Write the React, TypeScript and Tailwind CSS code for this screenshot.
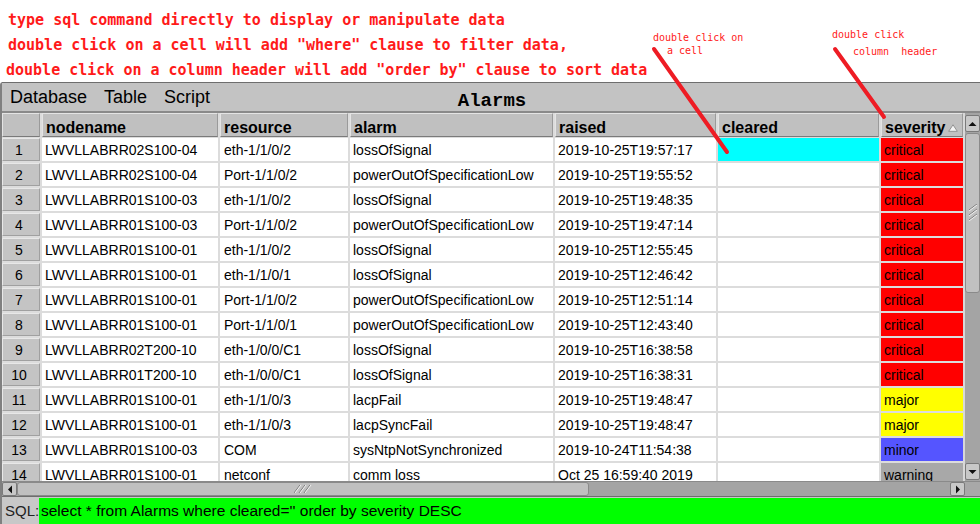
import React from "react";

type Row = [string, string, string, string, string, string];

const rows: Row[] = [
  ["LWVLLABRR02S100-04", "eth-1/1/0/2", "lossOfSignal", "2019-10-25T19:57:17", "cyan", "critical"],
  ["LWVLLABRR02S100-04", "Port-1/1/0/2", "powerOutOfSpecificationLow", "2019-10-25T19:55:52", "", "critical"],
  ["LWVLLABRR01S100-03", "eth-1/1/0/2", "lossOfSignal", "2019-10-25T19:48:35", "", "critical"],
  ["LWVLLABRR01S100-03", "Port-1/1/0/2", "powerOutOfSpecificationLow", "2019-10-25T19:47:14", "", "critical"],
  ["LWVLLABRR01S100-01", "eth-1/1/0/2", "lossOfSignal", "2019-10-25T12:55:45", "", "critical"],
  ["LWVLLABRR01S100-01", "eth-1/1/0/1", "lossOfSignal", "2019-10-25T12:46:42", "", "critical"],
  ["LWVLLABRR01S100-01", "Port-1/1/0/2", "powerOutOfSpecificationLow", "2019-10-25T12:51:14", "", "critical"],
  ["LWVLLABRR01S100-01", "Port-1/1/0/1", "powerOutOfSpecificationLow", "2019-10-25T12:43:40", "", "critical"],
  ["LWVLLABRR02T200-10", "eth-1/0/0/C1", "lossOfSignal", "2019-10-25T16:38:58", "", "critical"],
  ["LWVLLABRR01T200-10", "eth-1/0/0/C1", "lossOfSignal", "2019-10-25T16:38:31", "", "critical"],
  ["LWVLLABRR01S100-01", "eth-1/1/0/3", "lacpFail", "2019-10-25T19:48:47", "", "major"],
  ["LWVLLABRR01S100-01", "eth-1/1/0/3", "lacpSyncFail", "2019-10-25T19:48:47", "", "major"],
  ["LWVLLABRR01S100-03", "COM", "sysNtpNotSynchronized", "2019-10-24T11:54:38", "", "minor"],
  ["LWVLLABRR01S100-01", "netconf", "comm loss", "Oct 25 16:59:40 2019", "", "warning"],
];

const sevBg: Record<string, string> = {
  critical: "bg-[#ff0000]",
  major: "bg-[#ffff00]",
  minor: "bg-[#5555ff]",
  warning: "bg-[#a8a8a8]",
};

const gridCols = "grid grid-cols-[38px_176px_128px_203px_161px_161px_82px] gap-x-[2px]";

function HeaderCell({ children }: { children?: React.ReactNode }) {
  return (
    <div className="h-[24px] bg-[#c0c0c0] border-t border-l border-t-[#e4e4e4] border-l-[#e4e4e4] border-b border-r border-b-[#7a7a7a] border-r-[#9a9a9a] pl-[3px] pt-[5px] flex items-center text-[16px] font-bold text-black leading-none">
      {children}
    </div>
  );
}

export default function App() {
  return (
    <div
      className="relative w-[980px] h-[524px] overflow-hidden bg-white"
      style={{ fontFamily: '"Liberation Sans", Arial, sans-serif' }}
    >
      {/* annotations */}
      <div
        className="h-[82px] pt-[8px] text-[15px] font-bold text-[#ff1a1a] leading-[25px] whitespace-pre"
        style={{ fontFamily: '"DejaVu Sans Mono", monospace' }}
      >
        <div className="pl-[8px]">type sql command directly to display or manipulate data</div>
        <div className="pl-[8px]">double click on a cell will add "where" clause to filter data,</div>
        <div className="pl-[6px]">double click on a column header will add "order by" clause to sort data</div>
      </div>
      <div
        className="absolute text-[10px] text-[#ff1a1a] leading-[12px] whitespace-pre"
        style={{ fontFamily: '"DejaVu Sans Mono", monospace', left: 653, top: 32 }}
      >
        double click on
      </div>
      <div
        className="absolute text-[10px] text-[#ff1a1a] leading-[12px] whitespace-pre"
        style={{ fontFamily: '"DejaVu Sans Mono", monospace', left: 667, top: 45 }}
      >
        a cell
      </div>
      <div
        className="absolute text-[10px] text-[#ff1a1a] leading-[12px] whitespace-pre"
        style={{ fontFamily: '"DejaVu Sans Mono", monospace', left: 832, top: 29 }}
      >
        double click
      </div>
      <div
        className="absolute text-[10px] text-[#ff1a1a] leading-[12px] whitespace-pre"
        style={{ fontFamily: '"DejaVu Sans Mono", monospace', left: 853, top: 46 }}
      >
        column  header
      </div>

      {/* window */}
      <div className="flex flex-col h-[442px] bg-[#c0c0c0] border-l-2 border-l-[#808080] rounded-tl-[3px]">
        {/* menubar */}
        <div className="relative h-[31px] border-t border-t-[#6e6e6e] border-b-2 border-b-[#8a8a8a] bg-[#c3c3c3] flex items-center text-[18px] text-black">
          <span className="ml-[8px]">Database</span>
          <span className="ml-[17px]">Table</span>
          <span className="ml-[17px]">Script</span>
          <div
            className="absolute left-0 right-0 top-[6px] text-center text-[19px] font-bold leading-[24px] pl-[2px]"
            style={{ fontFamily: '"Liberation Mono", "Courier New", monospace' }}
          >
            Alarms
          </div>
        </div>

        {/* table area */}
        <div className="flex h-[368px]">
          <div className="w-[961px] h-[368px] overflow-hidden bg-[#dcdcdc] text-[14px] text-black">
            <div className={gridCols}>
              <HeaderCell />
              <HeaderCell>nodename</HeaderCell>
              <HeaderCell>resource</HeaderCell>
              <HeaderCell>alarm</HeaderCell>
              <HeaderCell>raised</HeaderCell>
              <HeaderCell>cleared</HeaderCell>
              <HeaderCell>
                <span>severity</span>
                <svg className="ml-auto mr-[4px]" width="10" height="8" viewBox="0 0 10 8">
                  <path d="M5 0.8 L9.3 7.3 L0.7 7.3 Z" fill="#f4f4f4" stroke="#8a8a8a" strokeWidth="0.9" />
                </svg>
              </HeaderCell>
            </div>
            <div className="flex flex-col gap-y-[2px] pt-[1px]">
              {rows.map((r, i) => (
                <div key={i} className={gridCols}>
                  <div className="h-[23px] bg-[#c4c4c4] border border-t-[#e8e8e8] border-l-[#e8e8e8] border-b-[#a0a0a0] border-r-[#a0a0a0] flex items-center justify-center pr-[4px] leading-none">
                    {i + 1}
                  </div>
                  <div className="h-[23px] bg-white flex items-center pl-[3px] leading-none whitespace-nowrap overflow-hidden">{r[0]}</div>
                  <div className="h-[23px] bg-white flex items-center pl-[4px] leading-none whitespace-nowrap overflow-hidden">{r[1]}</div>
                  <div className="h-[23px] bg-white flex items-center pl-[3px] leading-none whitespace-nowrap overflow-hidden">{r[2]}</div>
                  <div className="h-[23px] bg-white flex items-center pl-[3px] leading-none whitespace-nowrap overflow-hidden">{r[3]}</div>
                  <div className={`h-[23px] flex items-center pl-[3px] leading-none ${r[4] === "cyan" ? "bg-[#00ffff]" : "bg-white"}`}></div>
                  <div className={`h-[23px] flex items-center pl-[3px] leading-none ${sevBg[r[5]]}`}>{r[5]}</div>
                </div>
              ))}
            </div>
          </div>
          {/* vertical scrollbar */}
          <div className="w-[17px] h-[368px] bg-[#a4a4a4] border-l-2 border-l-[#d8d8d8] flex flex-col">
            <div className="h-[17px] mt-[2px] bg-[#c8c8c8] border border-[#7a7a7a] rounded-[2px] flex items-center justify-center">
              <svg width="9" height="6" viewBox="0 0 9 6"><path d="M0.5 5 L4.5 1 L8.5 5 Z" fill="#111" /></svg>
            </div>
            <div className="h-[160px] mt-[1px] bg-[#c0c0c0] border border-[#8a8a8a] rounded-[3px] flex items-center justify-center">
              <svg width="10" height="18" viewBox="0 0 10 18">
                <path d="M1 6 L9 0 M1 11 L9 5 M1 16 L9 10" stroke="#7a7a7a" strokeWidth="1" />
                <path d="M1 7 L9 1 M1 12 L9 6 M1 17 L9 11" stroke="#f0f0f0" strokeWidth="1" />
              </svg>
            </div>
            <div className="flex-1" />
            <div className="h-[17px] mb-[1px] bg-[#c8c8c8] border border-[#7a7a7a] rounded-[2px] flex items-center justify-center">
              <svg width="9" height="6" viewBox="0 0 9 6"><path d="M0.5 1 L4.5 5 L8.5 1 Z" fill="#111" /></svg>
            </div>
          </div>
        </div>

        {/* horizontal scrollbar */}
        <div className="h-[15px] flex bg-[#a4a4a4] border-t border-t-[#8a8a8a]">
          <div className="w-[15px] h-[14px] bg-[#c8c8c8] border border-[#7a7a7a] rounded-[2px] flex items-center justify-center">
            <svg width="6" height="9" viewBox="0 0 6 9"><path d="M5 0.5 L1 4.5 L5 8.5 Z" fill="#111" /></svg>
          </div>
          <div className="w-[572px] h-[14px] bg-[#c0c0c0] border border-[#8a8a8a] rounded-[3px] flex items-center justify-center">
            <svg width="18" height="10" viewBox="0 0 18 10">
              <path d="M0 9 L6 1 M5 9 L11 1 M10 9 L16 1" stroke="#7a7a7a" strokeWidth="1" />
              <path d="M1 9 L7 1 M6 9 L12 1 M11 9 L17 1" stroke="#f0f0f0" strokeWidth="1" />
            </svg>
          </div>
          <div className="flex-1" />
          <div className="w-[15px] h-[14px] bg-[#c8c8c8] border border-[#7a7a7a] rounded-[2px] flex items-center justify-center">
            <svg width="6" height="9" viewBox="0 0 6 9"><path d="M1 0.5 L5 4.5 L1 8.5 Z" fill="#111" /></svg>
          </div>
          <div className="w-[15px] bg-[#a8a8a8]" />
        </div>

        {/* SQL bar */}
        <div className="flex-1 flex items-stretch border-t border-t-[#6e6e6e] bg-[#c8c8c8] pt-[1px]">
          <div className="w-[37px] flex items-center pl-[3px] text-[15px] text-[#222]">SQL:</div>
          <div className="flex-1 bg-[#00ff00] flex items-center pl-[2px] text-[15.5px] text-black">
            select * from Alarms where cleared='' order by severity DESC
          </div>
        </div>
      </div>

      {/* red arrows */}
      <svg className="absolute left-0 top-0 pointer-events-none" width="980" height="524">
        <line x1="654" y1="49" x2="727" y2="152" stroke="#ee1c24" strokeWidth="4" strokeLinecap="round" />
        <line x1="835" y1="49" x2="884" y2="117" stroke="#ee1c24" strokeWidth="4" strokeLinecap="round" />
      </svg>
    </div>
  );
}
